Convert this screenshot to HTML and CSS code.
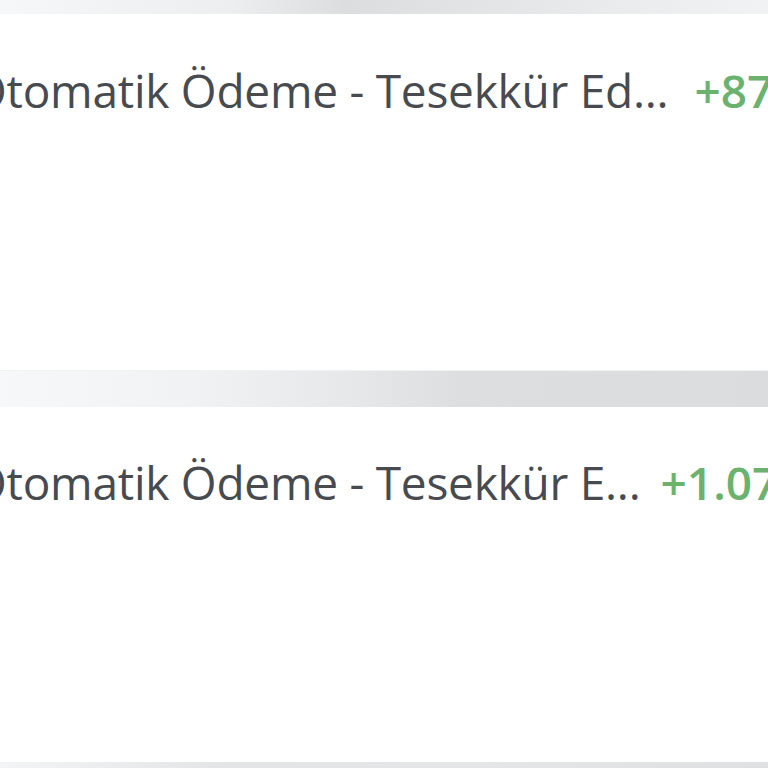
FILE: index.html
```html
<!DOCTYPE html>
<html lang="tr">
<head>
<meta charset="utf-8">
<link rel="stylesheet" href="styles.css">
</head>
<body>
<div class="screen">
  <div class="band band-top"></div>
  <div class="row row-first">
    <div class="line">
      <span class="title">Otomatik Ödeme - Tesekkür Ed...</span>
      <span class="amount">+87,50 TL</span>
    </div>
  </div>
  <div class="band band-mid"></div>
  <div class="row row-second">
    <div class="line line-second">
      <span class="title">Otomatik Ödeme - Tesekkür E...</span>
      <span class="amount">+1.075,00 TL</span>
    </div>
  </div>
  <div class="band band-bottom"></div>
</div>
</body>
</html>
```

FILE: styles.css
```css
html, body {
  margin: 0;
  padding: 0;
  background: #ffffff;
  overflow: hidden;
}

.screen {
  width: 768px;
  height: 768px;
  overflow: hidden;
  display: flex;
  flex-direction: column;
  font-family: "Open Sans", "Noto Sans", sans-serif;
}

.band {
  flex: none;
}

.band-top {
  height: 14px;
  background: linear-gradient(90deg, #f6f7f9 0%, #eceef0 30%, #dcdddf 45%, #e2e3e5 60%, #ecedef 85%, #f1f2f4 100%);
  box-shadow: 0 1px 2px rgba(0, 0, 0, 0.04);
}

.band-mid {
  height: 37px;
  background: linear-gradient(90deg, #f7f8f9 0%, #f1f2f4 25%, #e6e8ea 45%, #dcdee0 60%, #dadcde 100%);
  border-top: 1px solid #f0f1f2;
  box-sizing: border-box;
}

.band-bottom {
  height: 10px;
  background: linear-gradient(90deg, #f3f4f6 0%, #e3e4e6 30%, #e5e6e8 60%, #dfe0e2 100%);
}

.row {
  flex: none;
  background: #ffffff;
  box-sizing: border-box;
}

.row-first {
  height: 356px;
  padding-top: 48px;
}

.row-second {
  height: 355px;
  padding-top: 47px;
}

.line {
  display: flex;
  align-items: baseline;
  gap: 26px;
  margin-left: -29px;
  white-space: nowrap;
  font-size: 46px;
  line-height: 56px;
}

.line-second {
  gap: 20px;
}

.title {
  color: #474b4f;
  font-weight: 400;
  letter-spacing: -0.25px;
}

.amount {
  color: #6cb26f;
  font-weight: 600;
}
```
